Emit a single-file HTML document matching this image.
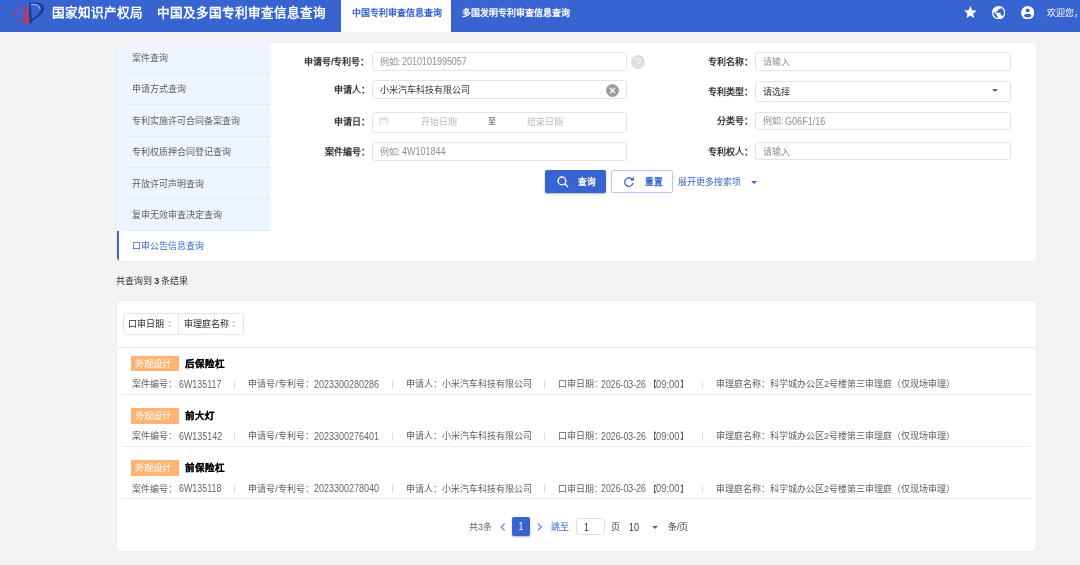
<!DOCTYPE html>
<html lang="zh-CN">
<head>
<meta charset="utf-8">
<style>
*{box-sizing:border-box;margin:0;padding:0}
html,body{width:1080px;height:565px;overflow:hidden}
body{background:#f3f3f3;font-family:"Liberation Sans",sans-serif;position:relative;color:#333;will-change:transform}
.a{position:absolute;white-space:nowrap}
#hdr{left:0;top:0;width:1080px;height:32px;background:#3764d1}
.t1{color:#fff;font-weight:bold;font-size:12.6px;line-height:16px}
.tab{font-size:9px;font-weight:bold;line-height:12px}
#card1{left:116.5px;top:42.5px;width:919.5px;height:218.5px;background:#fff;border-radius:4px;box-shadow:0 0 2px rgba(0,0,0,.08);overflow:hidden}
#side{left:0;top:0;width:153.5px;height:218.5px;background:#eef5fe}
.si{position:absolute;left:10px;width:143.5px;height:31.4px;border-bottom:1px solid #e0e9f8}
.st{position:absolute;left:15.3px;font-size:9px;color:#5f5f5f;line-height:12px;white-space:nowrap}
.lbl{font-size:9px;color:#333;font-weight:bold;line-height:12px;text-align:right}
.inp{border:1px solid #e3e3e3;border-radius:3px;background:#fff}
.ph{font-size:9px;color:#8f8f8f;line-height:12px}
#card2{left:116.7px;top:300.6px;width:919.3px;height:250px;background:#fff;border-radius:4px;box-shadow:0 0 2px rgba(0,0,0,.1)}
.tag{background:#ffb475;color:#fff;font-size:9.4px;line-height:16.4px;padding-left:3.6px;width:47.6px;height:15.6px}
.ttl{font-size:9.5px;font-weight:bold;color:#000;-webkit-text-stroke:0.15px #000;line-height:12px}
.meta{font-size:9px;color:#5e5e5e;line-height:12px}
.sep{color:#ccc}
.div{height:1px;background:#eaeaea}
.lat{line-height:12px;transform-origin:0 50%}
</style>
</head>
<body>
<div id="hdr" class="a">
  <svg class="a" style="left:0;top:0" width="48" height="28" viewBox="0 0 48 28">
    <path d="M27.9 1.2 L28.6 23.9 L24.3 23.9 Z" fill="#ea2f3a"/>
    <path d="M28.9 2.6 L30.6 2.4 L32.2 22.6 L29.2 23.6 Z" fill="#17408e"/>
    <path d="M30.4 2.4 C39.5 1.2 44.6 4.2 44.1 8.8 C43.6 13.6 37.8 18 31.6 21 L31.3 19.3 C36.4 16.3 40.6 12.6 40.9 8.9 C41.2 5.2 37.2 3.2 30.6 3.9 Z" fill="#17408e"/>
    <path d="M31.2 4.6 C36.8 3.9 40 5.8 39.9 9.3" stroke="#b9cff2" stroke-width="0.9" fill="none"/>
    <circle cx="22.5" cy="5.6" r="0.8" fill="#ea2f3a"/>
    <circle cx="17.9" cy="9.4" r="1.05" fill="#ea2f3a"/>
    <circle cx="22" cy="11.8" r="1.5" fill="#ea2f3a"/>
    <circle cx="15.2" cy="15.5" r="1.4" fill="#ea2f3a"/>
    <circle cx="20.6" cy="19.6" r="1.4" fill="#ea2f3a"/>
  </svg>
  <div class="a t1" style="left:51.6px;top:4.75px">国家知识产权局</div>
  <div class="a t1" style="left:157.4px;top:4.75px">中国及多国专利审查信息查询</div>
  <div class="a" style="left:341px;top:0;width:110px;height:32px;background:#fff"></div>
  <div class="a tab" style="left:352px;top:6.6px;color:#3764d1">中国专利审查信息查询</div>
  <div class="a tab" style="left:462px;top:6.6px;color:#fff">多国发明专利审查信息查询</div>
  <svg class="a" style="left:963.8px;top:6.1px" width="12.7" height="12.7" viewBox="2 2 20 20"><path fill="#fff" d="M12 17.27L18.18 21l-1.64-7.03L22 9.24l-7.19-.61L12 2 9.19 8.63 2 9.24l5.46 4.73L5.82 21z"/></svg>
  <svg class="a" style="left:992px;top:5.7px" width="13.4" height="13.4" viewBox="2 2 20 20"><path fill="#fff" d="M12 2C6.48 2 2 6.48 2 12s4.48 10 10 10 10-4.48 10-10S17.52 2 12 2zm-1 17.93c-3.95-.49-7-3.850-7-7.930 0-.62.08-1.21.21-1.79L9 15v1c0 1.1.9 2 2 2v1.93zm6.9-2.54c-.26-.81-1-1.39-1.9-1.39h-1v-3c0-.55-.45-1-1-1H8v-2h2c.55 0 1-.45 1-1V7h2c1.1 0 2-.9 2-2v-.41c2.93 1.19 5 4.06 5 7.41 0 2.080-.8 3.970-2.1 5.39z"/></svg>
  <svg class="a" style="left:1020.6px;top:6.1px" width="13.4" height="13.4" viewBox="-6.7 -6.7 13.4 13.4"><circle r="6.7" fill="#fff"/><circle cx="0" cy="-2.3" r="1.9" fill="#3764d1"/><ellipse cx="0" cy="2.9" rx="3.6" ry="1.8" fill="#3764d1"/></svg>
  <div class="a" style="left:1047px;top:6.5px;font-size:9px;line-height:12px;color:#fff">欢迎您，</div>
</div>

<div id="card1" class="a">
  <div id="side" class="a">
    <div class="si" style="top:0"></div>
    <div class="si" style="top:31.4px"></div>
    <div class="si" style="top:62.8px"></div>
    <div class="si" style="top:94.2px"></div>
    <div class="si" style="top:125.6px"></div>
    <div class="si" style="top:157px"></div>
    <div class="st" style="top:9.5px">案件查询</div>
    <div class="st" style="top:40.9px">申请方式查询</div>
    <div class="st" style="top:72.3px">专利实施许可合同备案查询</div>
    <div class="st" style="top:103.7px">专利权质押合同登记查询</div>
    <div class="st" style="top:135.1px">开放许可声明查询</div>
    <div class="st" style="top:166.5px">复审无效审查决定查询</div>
    <div class="a" style="left:0;top:188.4px;width:153.5px;height:30.1px;background:#fff;border-left:2.6px solid #3764d1"></div>
    <div class="st" style="top:197.9px;color:#3b6ad6">口审公告信息查询</div>
  </div>
</div>

<!-- form labels (absolute on page) -->
<div class="a lbl" style="left:284.5px;width:85px;top:55.5px">申请号/专利号：</div>
<div class="a lbl" style="left:284.5px;width:85px;top:84px">申请人：</div>
<div class="a lbl" style="left:284.5px;width:85px;top:116px">申请日：</div>
<div class="a lbl" style="left:284.5px;width:85px;top:145.5px">案件编号：</div>

<div class="a inp" style="left:372.2px;top:52.0px;width:255.3px;height:19.3px"></div>
<div class="a ph" style="left:379.6px;top:55.5px">例如:</div><div class="a lat" style="left:402.35px;top:56.30px;color:#8f8f8f;font-size:10.4px;transform:scaleX(0.863)">2010101995057</div>
<svg class="a" style="left:631.3px;top:54.7px" width="14" height="14" viewBox="0 0 14 14"><circle cx="7" cy="7" r="7" fill="#dedede"/><text x="7" y="10.6" font-size="11" font-family="Liberation Sans" fill="#fff" text-anchor="middle">?</text></svg>

<div class="a inp" style="left:372.2px;top:80.3px;width:255.3px;height:19.0px"></div>
<div class="a ph" style="left:380px;top:84px;color:#333">小米汽车科技有限公司</div>
<svg class="a" style="left:605.7px;top:83.5px" width="13" height="13" viewBox="0 0 13 13"><circle cx="6.5" cy="6.5" r="6.5" fill="#9e9e9e"/><path d="M4 4L9 9M9 4L4 9" stroke="#fff" stroke-width="1.3"/></svg>

<div class="a inp" style="left:372.2px;top:111.5px;width:255.3px;height:21.8px"></div>
<svg class="a" style="left:379px;top:116.6px" width="9" height="8.8" viewBox="0 0 9 8.8"><rect x="0.6" y="1.1" width="7.8" height="7.2" rx="1" fill="none" stroke="#dcdcdc" stroke-width="1"/><rect x="0.6" y="1.1" width="7.8" height="2.2" fill="#dcdcdc"/><path d="M1 5.2h7M1 6.9h7" stroke="#e8e8e8" stroke-width=".6"/><path d="M2.5 0v1.5M6.5 0v1.5" stroke="#dcdcdc" stroke-width="1"/></svg>
<div class="a ph" style="left:421px;top:116px;color:#bbb">开始日期</div>
<div class="a ph" style="left:487.7px;top:115.5px;color:#333;font-size:8px">至</div>
<div class="a ph" style="left:527px;top:116px;color:#bbb">结束日期</div>

<div class="a inp" style="left:372.2px;top:141.6px;width:255.3px;height:19.4px"></div>
<div class="a ph" style="left:379.6px;top:145.5px">例如:</div><div class="a lat" style="left:401.85px;top:146.30px;color:#8f8f8f;font-size:10.4px;transform:scaleX(0.866)">4W101844</div>

<div class="a lbl" style="left:668px;width:85px;top:55.5px">专利名称：</div>
<div class="a lbl" style="left:668px;width:85px;top:85.5px">专利类型：</div>
<div class="a lbl" style="left:668px;width:85px;top:115px">分类号：</div>
<div class="a lbl" style="left:668px;width:85px;top:145.5px">专利权人：</div>

<div class="a inp" style="left:755.2px;top:52.3px;width:255.4px;height:18.7px"></div>
<div class="a ph" style="left:763px;top:55.5px">请输入</div>
<div class="a inp" style="left:755.2px;top:81.0px;width:255.4px;height:20.8px"></div>
<div class="a ph" style="left:763px;top:85.5px;color:#333">请选择</div>
<svg class="a" style="left:992px;top:89px" width="6" height="3" viewBox="0 0 6 3"><path d="M0 0h6L3 3z" fill="#666"/></svg>
<div class="a inp" style="left:755.2px;top:111.8px;width:255.4px;height:18.2px"></div>
<div class="a ph" style="left:763px;top:115px">例如:</div><div class="a lat" style="left:785.35px;top:115.80px;color:#8f8f8f;font-size:10.4px;transform:scaleX(0.872)">G06F1/16</div>
<div class="a inp" style="left:755.2px;top:142.1px;width:255.4px;height:18.4px"></div>
<div class="a ph" style="left:763px;top:145.5px">请输入</div>

<!-- buttons -->
<div class="a" style="left:545.2px;top:170.4px;width:61px;height:23.1px;background:#3764d1;border-radius:2px;box-shadow:0 1px 2px rgba(0,0,0,.3)"></div>
<svg class="a" style="left:556.5px;top:175.8px" width="12" height="12" viewBox="0 0 12 12"><circle cx="4.9" cy="4.9" r="3.9" fill="none" stroke="#fff" stroke-width="1.3"/><path d="M7.6 7.6L11 11" stroke="#fff" stroke-width="1.4"/></svg>
<div class="a" style="left:578.4px;top:176.3px;font-size:8.7px;font-weight:bold;color:#fff;line-height:12px">查询</div>
<div class="a" style="left:611.3px;top:170.3px;width:61.5px;height:23.2px;background:#fff;border:1px solid #b3c6f1;border-radius:2px"></div>
<svg class="a" style="left:623px;top:176px" width="12" height="12" viewBox="0 0 12 12"><path d="M9.6 4.2A4.2 4.2 0 1 0 10 7" fill="none" stroke="#3764d1" stroke-width="1.3"/><path d="M7.2 4.6H11V0.8z" fill="#3764d1"/></svg>
<div class="a" style="left:645.1px;top:176.1px;font-size:8.7px;font-weight:bold;color:#3764d1;line-height:12px">重置</div>
<div class="a" style="left:678.3px;top:176px;font-size:9px;color:#3764d1;line-height:12px">展开更多搜索项</div>
<svg class="a" style="left:750.5px;top:180.5px" width="6.2" height="3" viewBox="0 0 6 3"><path d="M0 0h6L3 3z" fill="#3764d1"/></svg>

<!-- results -->
<div class="a" style="left:116.3px;top:275px;font-size:9px;color:#333;line-height:12px;font-weight:500;word-spacing:-0.6px">共查询到 <b>3</b> 条结果</div>

<div id="card2" class="a"></div>
<div class="a" style="left:123.1px;top:313.1px;width:120.6px;height:21.5px;border:1px solid #e3e3e3;border-radius:4px;background:#fff"></div>
<div class="a" style="left:178.3px;top:313.6px;width:1px;height:20.5px;background:#e6e6e6"></div>
<div class="a" style="left:128.1px;top:318px;font-size:9px;color:#2a2a2a;line-height:12px;font-weight:500">口审日期</div>
<div class="a" style="left:183.7px;top:318px;font-size:9px;color:#2a2a2a;line-height:12px;font-weight:500">审理庭名称</div>
<svg class="a" style="left:167.6px;top:319.6px" width="3.4" height="8" viewBox="0 0 3.4 8"><path d="M0 3L1.7 0.6L3.4 3zM0 5L1.7 7.4L3.4 5z" fill="#c8c8c8"/></svg>
<svg class="a" style="left:232px;top:319.6px" width="3.4" height="8" viewBox="0 0 3.4 8"><path d="M0 3L1.7 0.6L3.4 3zM0 5L1.7 7.4L3.4 5z" fill="#c8c8c8"/></svg>
<div class="a div" style="left:116.7px;top:347px;width:919.3px"></div>

<!-- items -->
<div id="items"></div>
<div class="a tag" style="left:131.3px;top:355.8px">外观设计</div>
<div class="a ttl" style="left:185.3px;top:357.5px">后保险杠</div>
<div class="a meta" style="left:131.5px;top:378.2px">案件编号：</div>
<div class="a lat" style="left:179.05px;top:379.00px;color:#666;font-size:10.4px;transform:scaleX(0.858);">6W135117</div>
<div class="a" style="left:234px;top:380.8px;width:1px;height:7px;background:#d6d6d6"></div>
<div class="a meta" style="left:248.3px;top:378.2px">申请号/专利号：</div>
<div class="a lat" style="left:313.75px;top:379.00px;color:#666;font-size:10.4px;transform:scaleX(0.866);">2023300280286</div>
<div class="a" style="left:392.3px;top:380.8px;width:1px;height:7px;background:#d6d6d6"></div>
<div class="a meta" style="left:405.8px;top:378.2px">申请人：小米汽车科技有限公司</div>
<div class="a" style="left:543.8px;top:380.8px;width:1px;height:7px;background:#d6d6d6"></div>
<div class="a meta" style="left:557.9px;top:378.2px">口审日期：</div>
<div class="a lat" style="left:601.45px;top:379.00px;color:#666;font-size:10.4px;transform:scaleX(0.846);">2026-03-26</div>
<div class="a meta" style="left:647.9px;top:378.2px">【</div>
<div class="a lat" style="left:656.15px;top:379.00px;color:#666;font-size:10.4px;transform:scaleX(0.9);">09:00</div>
<div class="a meta" style="left:680.1px;top:378.2px">】</div>
<div class="a" style="left:701.8px;top:380.8px;width:1px;height:7px;background:#d6d6d6"></div>
<div class="a meta" style="left:715.9px;top:378.2px">审理庭名称：科学城办公区2号楼第三审理庭（仅现场审理）</div>
<div class="a div" style="left:121.7px;top:393.7px;width:909.3px"></div>
<div class="a tag" style="left:131.3px;top:408.0px">外观设计</div>
<div class="a ttl" style="left:185.3px;top:409.7px">前大灯</div>
<div class="a meta" style="left:131.5px;top:430.4px">案件编号：</div>
<div class="a lat" style="left:179.05px;top:431.20px;color:#666;font-size:10.4px;transform:scaleX(0.858);">6W135142</div>
<div class="a" style="left:234px;top:433.0px;width:1px;height:7px;background:#d6d6d6"></div>
<div class="a meta" style="left:248.3px;top:430.4px">申请号/专利号：</div>
<div class="a lat" style="left:313.75px;top:431.20px;color:#666;font-size:10.4px;transform:scaleX(0.866);">2023300276401</div>
<div class="a" style="left:392.3px;top:433.0px;width:1px;height:7px;background:#d6d6d6"></div>
<div class="a meta" style="left:405.8px;top:430.4px">申请人：小米汽车科技有限公司</div>
<div class="a" style="left:543.8px;top:433.0px;width:1px;height:7px;background:#d6d6d6"></div>
<div class="a meta" style="left:557.9px;top:430.4px">口审日期：</div>
<div class="a lat" style="left:601.45px;top:431.20px;color:#666;font-size:10.4px;transform:scaleX(0.846);">2026-03-26</div>
<div class="a meta" style="left:647.9px;top:430.4px">【</div>
<div class="a lat" style="left:656.15px;top:431.20px;color:#666;font-size:10.4px;transform:scaleX(0.9);">09:00</div>
<div class="a meta" style="left:680.1px;top:430.4px">】</div>
<div class="a" style="left:701.8px;top:433.0px;width:1px;height:7px;background:#d6d6d6"></div>
<div class="a meta" style="left:715.9px;top:430.4px">审理庭名称：科学城办公区2号楼第三审理庭（仅现场审理）</div>
<div class="a div" style="left:121.7px;top:445.9px;width:909.3px"></div>
<div class="a tag" style="left:131.3px;top:460.2px">外观设计</div>
<div class="a ttl" style="left:185.3px;top:461.9px">前保险杠</div>
<div class="a meta" style="left:131.5px;top:482.6px">案件编号：</div>
<div class="a lat" style="left:179.05px;top:483.40px;color:#666;font-size:10.4px;transform:scaleX(0.858);">6W135118</div>
<div class="a" style="left:234px;top:485.2px;width:1px;height:7px;background:#d6d6d6"></div>
<div class="a meta" style="left:248.3px;top:482.6px">申请号/专利号：</div>
<div class="a lat" style="left:313.75px;top:483.40px;color:#666;font-size:10.4px;transform:scaleX(0.866);">2023300278040</div>
<div class="a" style="left:392.3px;top:485.2px;width:1px;height:7px;background:#d6d6d6"></div>
<div class="a meta" style="left:405.8px;top:482.6px">申请人：小米汽车科技有限公司</div>
<div class="a" style="left:543.8px;top:485.2px;width:1px;height:7px;background:#d6d6d6"></div>
<div class="a meta" style="left:557.9px;top:482.6px">口审日期：</div>
<div class="a lat" style="left:601.45px;top:483.40px;color:#666;font-size:10.4px;transform:scaleX(0.846);">2026-03-26</div>
<div class="a meta" style="left:647.9px;top:482.6px">【</div>
<div class="a lat" style="left:656.15px;top:483.40px;color:#666;font-size:10.4px;transform:scaleX(0.9);">09:00</div>
<div class="a meta" style="left:680.1px;top:482.6px">】</div>
<div class="a" style="left:701.8px;top:485.2px;width:1px;height:7px;background:#d6d6d6"></div>
<div class="a meta" style="left:715.9px;top:482.6px">审理庭名称：科学城办公区2号楼第三审理庭（仅现场审理）</div>
<div class="a div" style="left:121.7px;top:498.1px;width:909.3px"></div>
<div class="a meta" style="left:469px;top:521px">共3条</div>
<svg class="a" style="left:500px;top:523px" width="5.5" height="8" viewBox="0 0 5.5 8"><path d="M4.7 0.6L1.1 4L4.7 7.4" fill="none" stroke="#5a80dc" stroke-width="1.15"/></svg>
<div class="a" style="left:512.1px;top:517px;width:17.8px;height:19.4px;background:#3764d1;border-radius:2px;box-shadow:0 1px 2px rgba(0,0,0,.3);color:#fff;font-size:10.4px;line-height:19px;text-align:center"><span style="display:inline-block;transform:scaleX(.86)">1</span></div>
<svg class="a" style="left:536.5px;top:523px" width="5.5" height="8" viewBox="0 0 5.5 8"><path d="M0.8 0.6L4.4 4L0.8 7.4" fill="none" stroke="#5a80dc" stroke-width="1.15"/></svg>
<div class="a meta" style="left:550.7px;top:521px;color:#3764d1">跳至</div>
<div class="a" style="left:576.2px;top:517.8px;width:28.8px;height:17.5px;border:1px solid #e2e2e2;border-radius:3px;background:#fff"></div>
<div class="a lat" style="left:583.85px;top:521.80px;color:#333;font-size:10.4px;transform:scaleX(0.86);">1</div>
<div class="a meta" style="left:611.2px;top:521px;color:#333">页</div>
<div class="a lat" style="left:629.15px;top:521.80px;color:#333;font-size:10.4px;transform:scaleX(0.86);">10</div>
<svg class="a" style="left:651.7px;top:525.5px" width="6" height="3" viewBox="0 0 6 3"><path d="M0 0h6L3 3z" fill="#666"/></svg>
<div class="a meta" style="left:667.9px;top:521px;color:#333">条/页</div>

</body>
</html>
